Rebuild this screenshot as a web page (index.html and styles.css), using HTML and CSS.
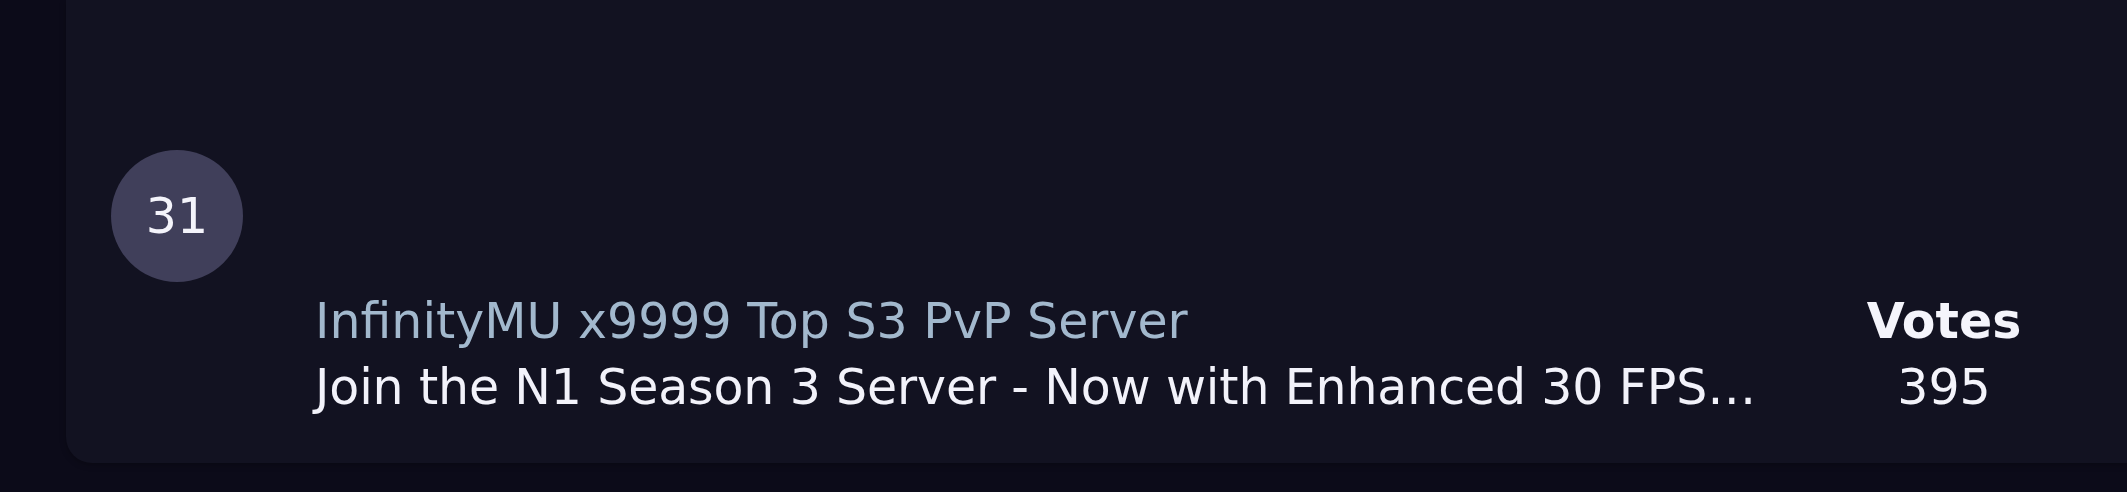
FILE: index.html
```html
<!DOCTYPE html>
<html lang="en">
<head>
<meta charset="utf-8">
<title>Server list</title>
<link rel="stylesheet" href="styles.css">
</head>
<body>
<div class="page">
  <div class="card">
    <div class="rank">31</div>
    <div class="row">
      <div class="info">
        <div class="title">InfinityMU x9999 Top S3 PvP Server</div>
        <div class="desc">Join the N1 Season 3 Server - Now with Enhanced 30 FPS…</div>
      </div>
      <div class="votes">
        <div class="votes-label">Votes</div>
        <div class="votes-count">395</div>
      </div>
    </div>
  </div>
</div>
</body>
</html>
```
FILE: styles.css
```css
html, body {
  margin: 0;
  padding: 0;
  background: #0c0b19;
  font-family: "DejaVu Sans", Verdana, sans-serif;
  overflow: hidden;
}
.page {
  padding-left: 66px;
  height: 492px;
}
.card {
  background: #121221;
  border-radius: 0 0 0 26px;
  padding: 150px 0 42px 45px;
  box-shadow: 0 2px 6px rgba(0, 0, 0, 0.25);
}
.rank {
  width: 132px;
  height: 132px;
  border-radius: 50%;
  background: #403f5a;
  color: #f4f4fb;
  font-size: 49px;
  display: flex;
  align-items: center;
  justify-content: center;
}
.row {
  display: flex;
  margin-top: 7px;
  padding-left: 204px;
  font-size: 49px;
  line-height: 66px;
}
.info {
  width: 1450px;
  min-width: 0;
}
.title {
  color: #a2b8cd;
  white-space: nowrap;
}
.desc {
  color: #f2f2fa;
  white-space: nowrap;
  letter-spacing: -0.15px;
}
.votes {
  width: 290px;
  margin-left: 34px;
  text-align: center;
  color: #f4f4fb;
}
.votes-label {
  font-weight: bold;
}
```
